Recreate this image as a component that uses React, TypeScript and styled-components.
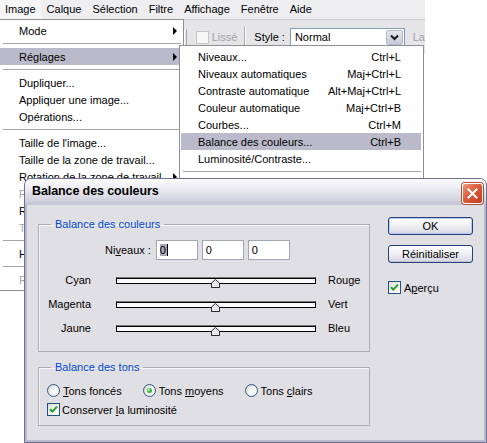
import React from "react";
import styled, { createGlobalStyle } from "styled-components";

const GlobalStyle = createGlobalStyle`
  html, body { margin: 0; padding: 0; background: #ffffff; }
  body {
    font-family: "Liberation Sans", Arial, sans-serif;
    font-size: 11px;
    color: #000;
  }
  *, *::before, *::after { box-sizing: border-box; }
`;

const Desktop = styled.div`
  position: relative;
  width: 487px;
  height: 443px;
  overflow: hidden;
  background: #ffffff;
`;

/* ---------- menu bar & options bar ---------- */

const MenuBar = styled.div`
  display: flex;
  width: 425px;
  height: 19px;
  background: #eeeef1;
`;

const MenuTitle = styled.div<{ $open?: boolean }>`
  padding: 0 5.5px;
  line-height: 19px;
  white-space: nowrap;
  background: ${(p) => (p.$open ? "#f6f6f9" : "transparent")};
  &:first-child { padding-left: 5px; }
`;

const OptionsBar = styled.div`
  display: flex;
  align-items: center;
  width: 425px;
  height: 35px;
  padding-left: 184px;
  background: #e5e5e8;
  border-top: 1px solid #cacace;
`;

const Grip = styled.div`
  width: 3px;
  height: 17px;
  border-left: 1px solid #ffffff;
  border-right: 1px solid #a8a8ae;
`;

const ToolCheck = styled.span`
  width: 13px;
  height: 13px;
  margin-left: 9px;
  border: 1px solid #c6c6c8;
  background: #f7f7f7;
`;

const ToolText = styled.span<{ $disabled?: boolean; $gap?: number }>`
  margin-left: ${(p) => p.$gap ?? 0}px;
  color: ${(p) => (p.$disabled ? "#a2a2a6" : "#000")};
  white-space: nowrap;
`;

const ToolDivider = styled.div`
  width: 2px;
  height: 21px;
  margin-left: 7px;
  border-left: 1px solid #a9a9ae;
  border-right: 1px solid #ffffff;
`;

const Select = styled.div`
  display: flex;
  align-items: center;
  justify-content: space-between;
  width: 118px;
  height: 19px;
  margin-left: 5px;
  padding: 0 1px 0 4px;
  border: 1px solid #7f9db9;
  background: #ffffff;
`;

const SelectButton = styled.span`
  display: flex;
  align-items: center;
  justify-content: center;
  width: 17px;
  height: 15px;
  border: 1px solid #b8bccb;
  border-radius: 2px;
  background: linear-gradient(#e4e6ee, #c7cad8);
`;

/* ---------- drop-down menus ---------- */

const Menu = styled.div<{ $x: number; $y: number; $w: number; $ml: number; $mr: number; $pl: number; $pr: number }>`
  --item-ml: ${(p) => p.$ml}px;
  --item-mr: ${(p) => p.$mr}px;
  --item-pl: ${(p) => p.$pl}px;
  --item-pr: ${(p) => p.$pr}px;
  position: absolute;
  left: ${(p) => p.$x}px;
  top: ${(p) => p.$y}px;
  width: ${(p) => p.$w}px;
  padding: 2px 0;
  background: #ffffff;
  border: 1px solid #8e8e94;
`;

const MenuItem = styled.div<{ $active?: boolean; $disabled?: boolean }>`
  display: flex;
  align-items: center;
  justify-content: space-between;
  height: 17px;
  margin: 0 var(--item-mr) 0 var(--item-ml);
  padding: 0 var(--item-pr) 0 var(--item-pl);
  white-space: nowrap;
  color: ${(p) => (p.$disabled ? "#a4a4a8" : "#000")};
  background: ${(p) => (p.$active ? "#bbbacb" : "transparent")};
`;

const Separator = styled.div`
  height: 1px;
  margin: 4px 2px 4px 3px;
  background: #a6a6aa;
`;

const Arrow = styled.span`
  width: 0;
  height: 0;
  border-left: 4px solid #000;
  border-top: 4px solid transparent;
  border-bottom: 4px solid transparent;
`;

/* ---------- dialog ---------- */

const Dialog = styled.section`
  position: absolute;
  left: 24px;
  top: 178px;
  width: 463px;
  height: 265px;
  display: flex;
  flex-direction: column;
  border: 1px solid #6f6f92;
  border-radius: 7px 7px 0 0;
  background: #b9b9cd;
  overflow: hidden;
`;

const TitleBar = styled.header`
  display: flex;
  align-items: center;
  justify-content: space-between;
  flex: none;
  height: 26px;
  padding: 0 3px 0 7px;
  background: linear-gradient(#fdfdfe 0%, #eeeef3 30%, #d9d9e4 70%, #c3c3d4 100%);
`;

const Title = styled.h1`
  margin: 0 0 3px;
  font-size: 12.5px;
  font-weight: bold;
  letter-spacing: -0.1px;
`;

const CloseButton = styled.div`
  display: flex;
  align-items: center;
  justify-content: center;
  width: 21px;
  height: 21px;
  margin-top: 3px;
  border: 1px solid #ffffff;
  border-radius: 3px;
  background: linear-gradient(135deg, #ec9a80 0%, #dc5d3d 45%, #c23d1d 100%);
  box-shadow: 0 0 0 1px #b0503a;
`;

const Frame = styled.div`
  flex: 1;
  display: flex;
  padding: 0 2px 2px;
`;

const Body = styled.div`
  flex: 1;
  display: flex;
  align-items: flex-start;
  gap: 18px;
  padding: 12px 0 0 11px;
  background: #e0dfe3;
`;

const LeftCol = styled.div`
  display: flex;
  flex-direction: column;
  gap: 9px;
  width: 332px;
  margin-top: 1px;
`;

const Group = styled.fieldset`
  margin: 0;
  padding: 0;
  min-width: 0;
  border: 1px solid #adadb4;
  box-shadow: inset 1px 1px 0 #f6f6f8;
`;

const Legend = styled.legend`
  margin-left: 12px;
  padding: 0 4px;
  line-height: 13px;
  font-size: 11px;
  color: #0046d5;
`;

const GroupContent = styled.div<{ $pt: number; $pb: number }>`
  display: flex;
  flex-direction: column;
  padding: ${(p) => p.$pt}px 0 ${(p) => p.$pb}px;
`;

const LevelsRow = styled.div`
  display: flex;
  align-items: center;
  height: 20px;
  padding-left: 66px;
  margin-bottom: 8px;
`;

const LevelsLabel = styled.span`
  margin-right: 5px;
  white-space: nowrap;
`;

const Field = styled.div`
  display: flex;
  align-items: center;
  width: 42px;
  height: 20px;
  margin-right: 4px;
  padding-left: 3px;
  border: 1px solid #a3a7b2;
  background: #ffffff;
`;

const Selected = styled.span`
  background: #a9a8b8;
  border-right: 1px solid #000;
  padding-right: 1px;
`;

const SliderRow = styled.div`
  display: flex;
  align-items: center;
  height: 24px;
`;

const SliderLabel = styled.span`
  width: 52px;
  text-align: right;
  white-space: nowrap;
`;

const Track = styled.div`
  position: relative;
  width: 200px;
  height: 7px;
  margin-left: 25px;
  border: 1px solid #000;
  border-top-color: #7c7c7c;
  background: #fbfbfb;
  box-shadow: inset 0 1px 0 #000;
`;

const Thumb = styled.svg`
  position: absolute;
  top: 1px;
  width: 9px;
  height: 9px;
  margin-left: -5px;
`;

const SideLabel = styled.span`
  margin-left: 12px;
`;

const OptionRow = styled.div<{ $gap: number; $mt?: number }>`
  display: flex;
  align-items: center;
  height: 17px;
  margin-top: ${(p) => p.$mt ?? 0}px;
  padding-left: 8px;
  gap: ${(p) => p.$gap}px;
`;

const Option = styled.label<{ $gap: number }>`
  display: flex;
  align-items: center;
  gap: ${(p) => p.$gap}px;
  white-space: nowrap;
`;

const RadioCircle = styled.span<{ $checked?: boolean }>`
  position: relative;
  flex: none;
  width: 13px;
  height: 13px;
  border-radius: 50%;
  border: 1px solid #2c5a8a;
  background: radial-gradient(circle at 65% 65%, #ffffff 0%, #f2f2f0 45%, #c9c9c4 100%);
  &::after {
    content: "";
    display: ${(p) => (p.$checked ? "block" : "none")};
    position: absolute;
    left: 3px;
    top: 3px;
    width: 5px;
    height: 5px;
    border-radius: 50%;
    background: radial-gradient(circle at 35% 35%, #b8f0b8 0%, #3fbd3f 45%, #1d8c1d 100%);
  }
`;

const CheckBox = styled.span`
  display: flex;
  align-items: center;
  justify-content: center;
  flex: none;
  width: 13px;
  height: 13px;
  border: 1px solid #1f5183;
  background: linear-gradient(135deg, #dcdcd6 0%, #f6f6f4 60%, #ffffff 100%);
`;

const RightCol = styled.div`
  display: flex;
  flex-direction: column;
  gap: 10px;
  width: 85px;
`;

const Button = styled.button<{ $default?: boolean }>`
  height: 18px;
  margin: 0;
  padding: 0;
  border: 1px solid #27407a;
  border-radius: 3px;
  font-family: inherit;
  font-size: 11px;
  color: #000;
  background: linear-gradient(#ffffff 0%, #f1f1f4 45%, #dedee8 85%, #cfd0dd 100%);
  box-shadow: ${(p) => (p.$default ? "inset 0 0 0 1px #b9cdf0" : "inset 0 -1px 0 #c6c7d4")};
`;

const PreviewRow = styled.label`
  display: flex;
  align-items: center;
  gap: 3px;
  height: 13px;
  margin-top: 8px;
`;

/* ---------- data ---------- */

type Item = { label: string; shortcut?: string; sub?: boolean; active?: boolean; disabled?: boolean } | "sep";

const imageMenu: Item[] = [
  { label: "Mode", sub: true },
  "sep",
  { label: "Réglages", sub: true, active: true },
  "sep",
  { label: "Dupliquer..." },
  { label: "Appliquer une image..." },
  { label: "Opérations..." },
  "sep",
  { label: "Taille de l'image..." },
  { label: "Taille de la zone de travail..." },
  { label: "Rotation de la zone de travail", sub: true },
  { label: "Recadrer", disabled: true },
  { label: "Rogner..." },
  { label: "Tout faire apparaître", disabled: true },
  "sep",
  { label: "Histogramme..." },
  "sep",
  { label: "Recouvrement...", disabled: true },
];

const adjustMenu: Item[] = [
  { label: "Niveaux...", shortcut: "Ctrl+L" },
  { label: "Niveaux automatiques", shortcut: "Maj+Ctrl+L" },
  { label: "Contraste automatique", shortcut: "Alt+Maj+Ctrl+L" },
  { label: "Couleur automatique", shortcut: "Maj+Ctrl+B" },
  { label: "Courbes...", shortcut: "Ctrl+M" },
  { label: "Balance des couleurs...", shortcut: "Ctrl+B", active: true },
  { label: "Luminosité/Contraste..." },
  "sep",
  { label: "Teinte/Saturation...", shortcut: "Ctrl+U" },
  { label: "Désaturer", shortcut: "Maj+Ctrl+U" },
  { label: "Remplacement de couleur..." },
  { label: "Correction sélective..." },
];

const sliders = [
  { left: "Cyan", right: "Rouge", value: 0 },
  { left: "Magenta", right: "Vert", value: 0 },
  { left: "Jaune", right: "Bleu", value: 0 },
];

function renderItems(items: Item[]) {
  return items.map((it, i) =>
    it === "sep" ? (
      <Separator key={i} />
    ) : (
      <MenuItem key={i} $active={it.active} $disabled={it.disabled}>
        <span>{it.label}</span>
        {it.sub ? <Arrow /> : it.shortcut ? <span>{it.shortcut}</span> : null}
      </MenuItem>
    )
  );
}

const Check = () => (
  <svg width="9" height="9" viewBox="0 0 9 9">
    <path d="M1 4.2 L3.3 6.6 L8 1.6" fill="none" stroke="#21a121" strokeWidth="2" />
  </svg>
);

export default function App() {
  return (
    <>
      <GlobalStyle />
      <Desktop>
        <MenuBar>
          {["Image", "Calque", "Sélection", "Filtre", "Affichage", "Fenêtre", "Aide"].map((t, i) => (
            <MenuTitle key={t} $open={i === 0}>
              {t}
            </MenuTitle>
          ))}
        </MenuBar>

        <OptionsBar>
          <Grip />
          <ToolCheck />
          <ToolText $disabled $gap={3}>Lissé</ToolText>
          <ToolDivider />
          <ToolText $gap={8}>Style :</ToolText>
          <Select>
            <span>Normal</span>
            <SelectButton>
              <svg width="9" height="7" viewBox="0 0 9 7">
                <path d="M1 1.5 L4.5 5 L8 1.5" fill="none" stroke="#1a1a1a" strokeWidth="2" />
              </svg>
            </SelectButton>
          </Select>
          <ToolText $disabled $gap={8}>La</ToolText>
        </OptionsBar>

        <Menu $x={-1} $y={19} $w={185} $ml={0} $mr={0} $pl={19} $pr={6}>
          {renderItems(imageMenu)}
        </Menu>

        <Menu $x={179} $y={45} $w={245} $ml={1} $mr={2} $pl={17} $pr={20}>
          {renderItems(adjustMenu)}
        </Menu>

        <Dialog>
          <TitleBar>
            <Title>Balance des couleurs</Title>
            <CloseButton>
              <svg width="11" height="11" viewBox="0 0 11 11">
                <path d="M1.5 1.5 L9.5 9.5 M9.5 1.5 L1.5 9.5" stroke="#ffffff" strokeWidth="2" strokeLinecap="square" />
              </svg>
            </CloseButton>
          </TitleBar>
          <Frame>
            <Body>
              <LeftCol>
                <Group>
                  <Legend>Balance des couleurs</Legend>
                  <GroupContent $pt={9} $pb={11}>
                    <LevelsRow>
                      <LevelsLabel>
                        Ni<u>v</u>eaux :
                      </LevelsLabel>
                      <Field>
                        <Selected>0</Selected>
                      </Field>
                      <Field>0</Field>
                      <Field>0</Field>
                    </LevelsRow>
                    {sliders.map((s) => (
                      <SliderRow key={s.left}>
                        <SliderLabel>{s.left}</SliderLabel>
                        <Track>
                          <Thumb viewBox="0 0 9 9" style={{ left: `${50 + s.value / 2}%` }}>
                            <path d="M0.5 8.5 V4 L4.5 0.5 L8.5 4 V8.5 Z" fill="#e9e9ec" stroke="#2a2a2a" />
                          </Thumb>
                        </Track>
                        <SideLabel>{s.right}</SideLabel>
                      </SliderRow>
                    ))}
                  </GroupContent>
                </Group>

                <Group>
                  <Legend>Balance des tons</Legend>
                  <GroupContent $pt={8} $pb={7}>
                    <OptionRow $gap={21}>
                      <Option $gap={3}>
                        <RadioCircle />
                        <span>
                          <u>T</u>ons foncés
                        </span>
                      </Option>
                      <Option $gap={3}>
                        <RadioCircle $checked />
                        <span>
                          Tons <u>m</u>oyens
                        </span>
                      </Option>
                      <Option $gap={3}>
                        <RadioCircle />
                        <span>
                          Tons <u>c</u>lairs
                        </span>
                      </Option>
                    </OptionRow>
                    <OptionRow $gap={0} $mt={2}>
                      <Option $gap={2}>
                        <CheckBox>
                          <Check />
                        </CheckBox>
                        <span>
                          Conserver <u>l</u>a luminosité
                        </span>
                      </Option>
                    </OptionRow>
                  </GroupContent>
                </Group>
              </LeftCol>

              <RightCol>
                <Button $default>OK</Button>
                <Button>Réinitialiser</Button>
                <PreviewRow>
                  <CheckBox>
                    <Check />
                  </CheckBox>
                  <span>
                    A<u>p</u>erçu
                  </span>
                </PreviewRow>
              </RightCol>
            </Body>
          </Frame>
        </Dialog>
      </Desktop>
    </>
  );
}
